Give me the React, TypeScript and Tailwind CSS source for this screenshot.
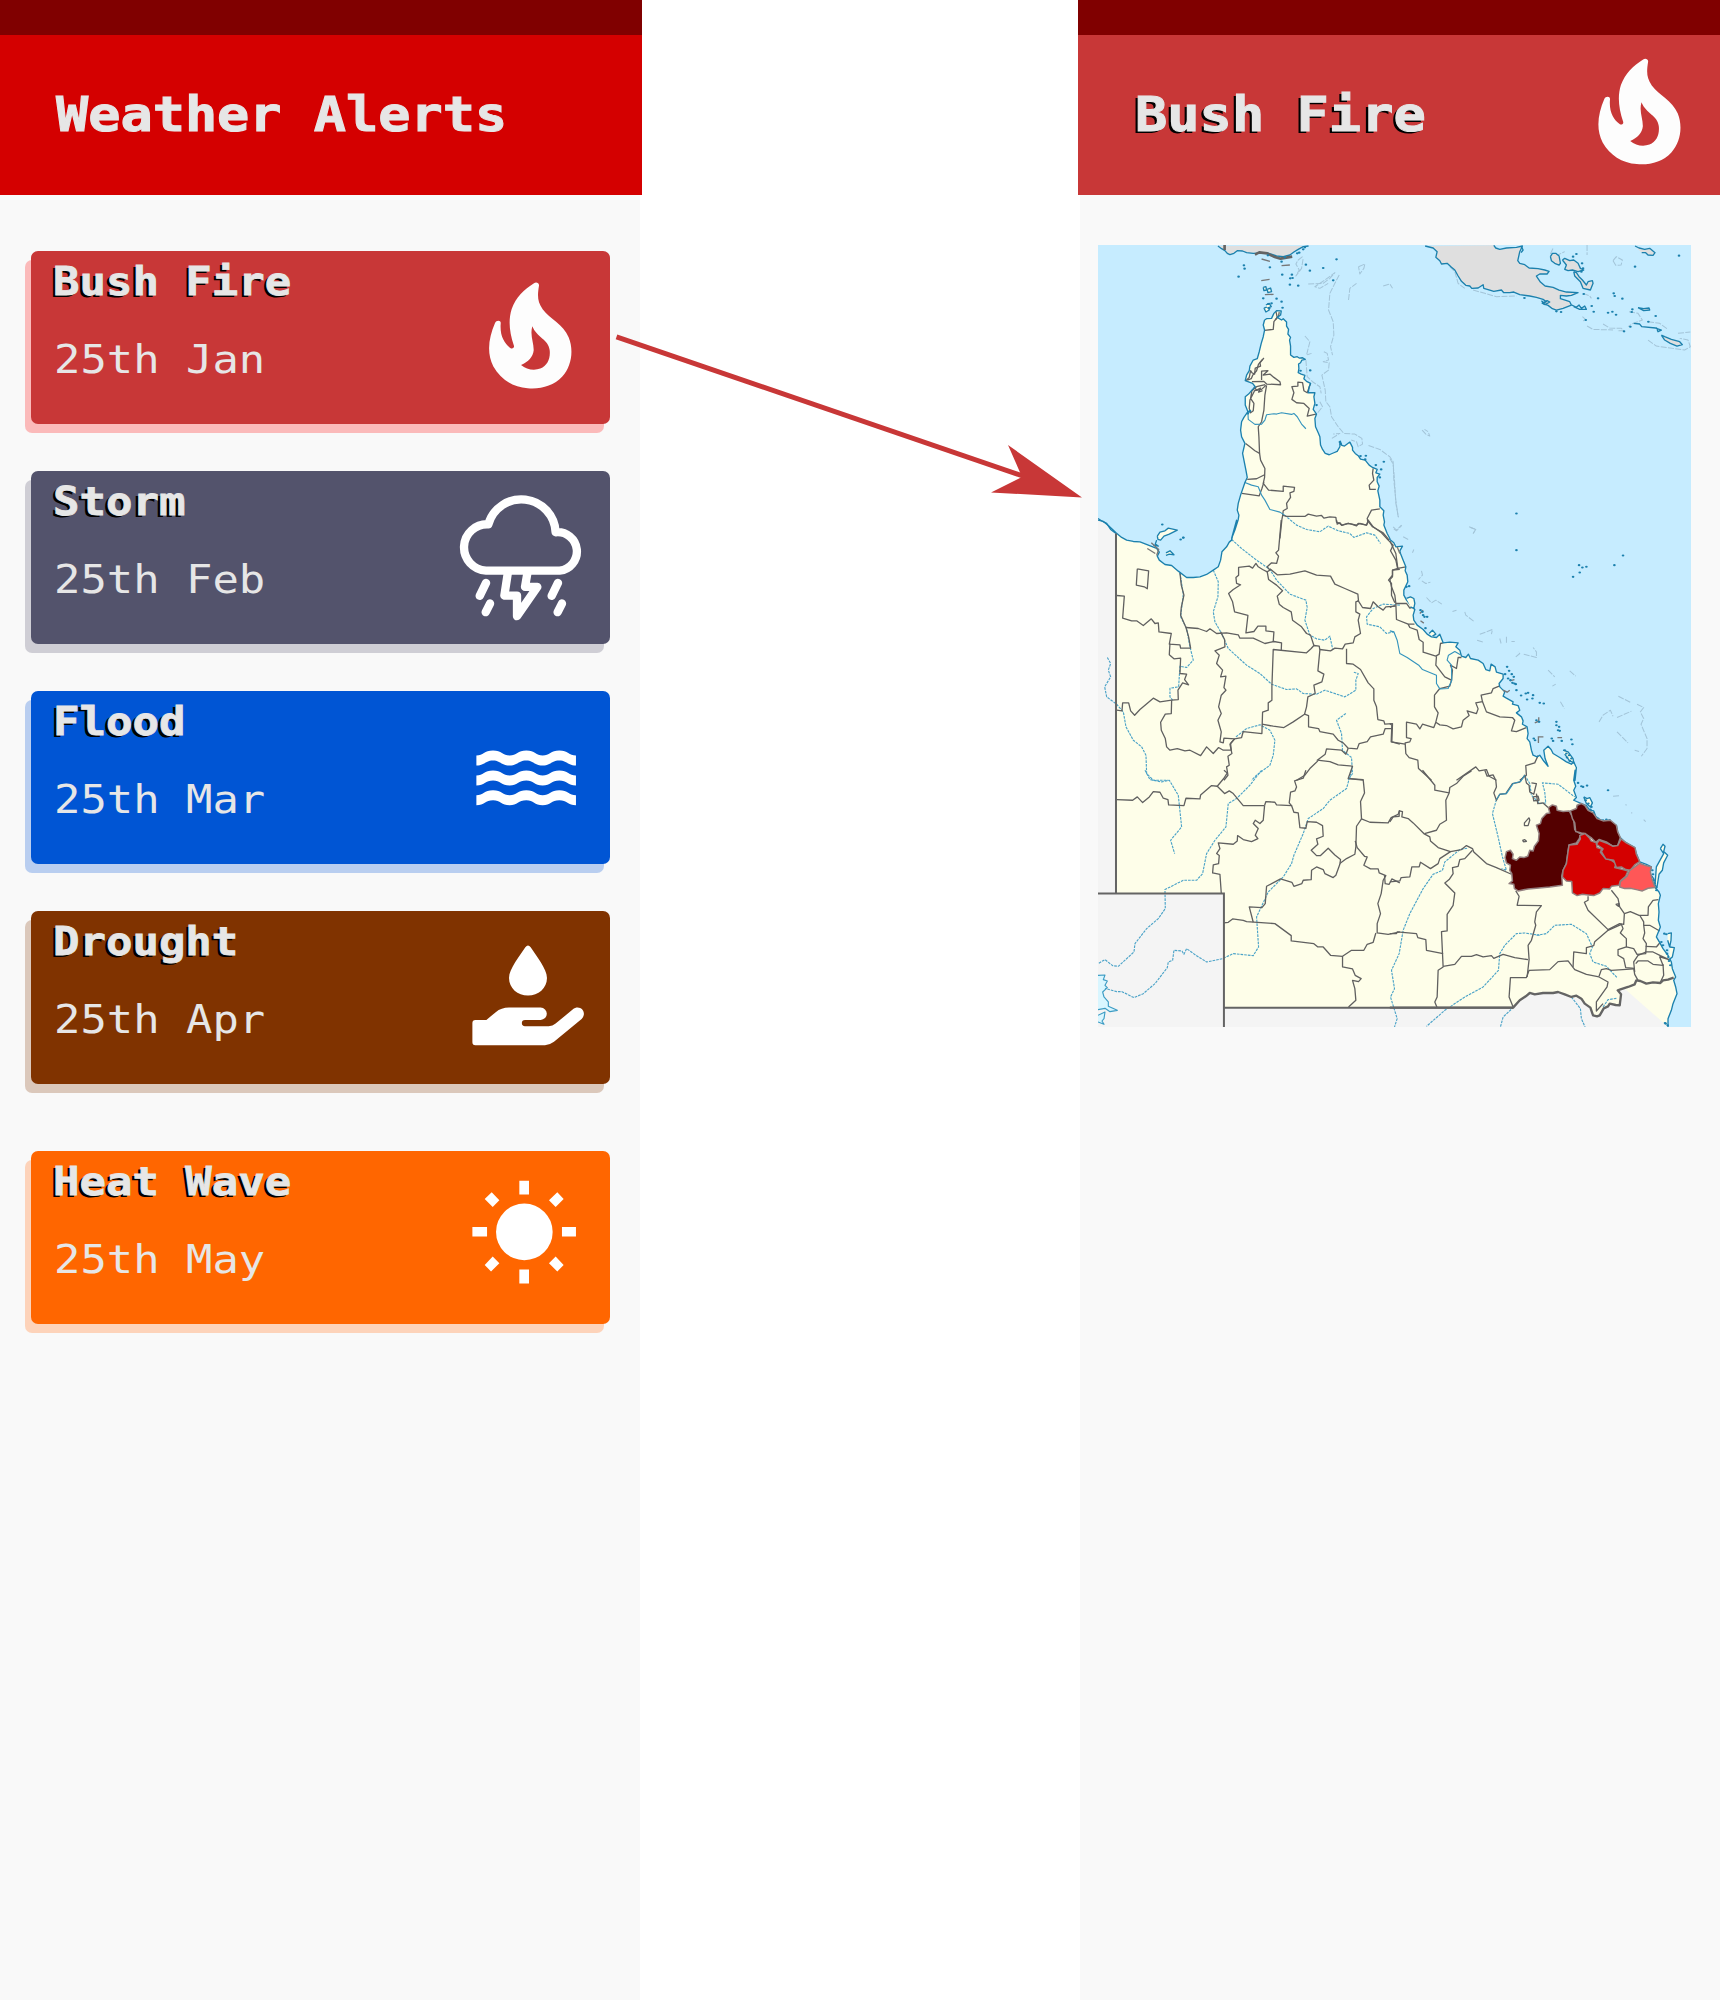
import React from "react";

/* ---------- icons ---------- */

const FLAME =
  "M252 41 C258 36 268 40 267 48 C262 78 262 96 278 119 C300 148 340 165 356 203 C372 242 365 290 337 321 C310 350 273 359 233 356 C189 353 151 329 130 291 C109 250 116 204 135 160 C139 150 154 151 152 162 C149 199 163 222 182 236 C187 239 193 235 192 229 C177 185 175 150 185 118 C198 83 222 60 252 41 Z M247 170 C239 197 252 219 251 243 C249 262 235 278 213 286 C229 300 252 304 271 297 C293 288 302 266 299 241 C295 209 261 205 247 170 Z";

type IconProps = { className?: string };

function FireIcon({ className }: IconProps) {
  return (
    <svg className={className} viewBox="0 -56 480 518" fill="#fdfdfd" fillRule="evenodd">
      <path d={FLAME} />
    </svg>
  );
}

function StormIcon({ className }: IconProps) {
  return (
    <svg
      className={className}
      viewBox="0 604 480 518"
      fill="none"
      stroke="#fff"
      strokeWidth="25"
      strokeLinecap="round"
      strokeLinejoin="round"
    >
      <path d="M108 903 A69.500 69.500 0 0 1 115 764 A103 103 0 0 1 317 788 A57.500 57.500 0 1 1 329 903 Z" />
      <path d="M174 906 L163 978 H201 V1040 L262 952 H225 L233 906" />
      <path d="M108 940 L89 979 M120 1002 L107 1028 M324 940 L305 979 M336 1002 L323 1028" />
    </svg>
  );
}

function FloodIcon({ className }: IconProps) {
  const wave =
    "M79 888 C100 888 102 873 129 873 C155 873 158 888 179 888 C200 888 203 873 229 873 C255 873 258 888 278 888 C299 888 302 873 328 873 C354 873 357 888 378 888 V918 C354 918 351 903 328 903 C304 903 302 918 278 918 C253 918 251 903 229 903 C205 903 202 918 179 918 C154 918 151 903 129 903 C106 903 103 918 79 918 Z";
  return (
    <svg className={className} viewBox="0 694 480 518" fill="#fff">
      <path d={wave} />
      <path d={wave} transform="translate(0 60)" />
      <path d={wave} transform="translate(0 119)" />
    </svg>
  );
}

function DroughtIcon({ className }: IconProps) {
  return (
    <svg className={className} viewBox="0 -56 480 518" fill="#fff">
      <path d="M226 53 Q234 42 242 53 C258 78 291 118 291 145 C291 176 265 198 234 198 C203 198 177 176 177 145 C177 118 210 78 226 53 Z" />
      <path d="M76 271 H109 L137 248 Q154 234 177 234 H272 A18.500 18.500 0 0 1 272 271 H225 A9.500 9.500 0 0 0 225 290 H296 Q308 290 317 282 L368 240 C390 222 414 249 395 268 L312 337 Q299 347 285 347 H76 Q67 347 67 338 V280 Q67 271 76 271 Z" />
    </svg>
  );
}

function HeatIcon({ className }: IconProps) {
  return (
    <svg className={className} viewBox="0 664 480 518" fill="#fff">
      <circle cx="223" cy="907" r="85" />
      <path d="M208 753h29v42h-29z M208 1020h29v42h-29z M67 892h44v29h-44z M336 892h42v29h-42z" />
      <path d="M125 788 L148 812 L128 832 L104 808 Z M322 788 L341 808 L317 832 L297 812 Z M128 981 L148 1001 L123 1026 L104 1006 Z M317 981 L341 1006 L322 1026 L297 1001 Z" />
    </svg>
  );
}

/* ---------- map ---------- */

type Tile = "A" | "B" | "C" | "D" | "E" | "F";
type Line = [Tile, string];

// The map is drawn in six sheets; each has its own origin.
const ORIGIN: Record<Tile, [number, number]> = {
  A: [0, 0],
  B: [900, 0],
  C: [0, 840],
  D: [900, 840],
  E: [0, 1590],
  F: [900, 1590],
};

const place = (tile: Tile, points: string) =>
  points
    .trim()
    .split(/\s+/)
    .map((pair) => {
      const [x, y] = pair.split(",").map(Number);
      return `${x + ORIGIN[tile][0]},${y + ORIGIN[tile][1]}`;
    })
    .join(" ");

const EAST_COAST = [
  place("A", "524,240 530,236 545,235 552,220 560,212 574,213 572,225 562,232 575,240 580,236 590,246 590,258 596,268 594,282 602,292 599,300 602,318 602,345 612,352 622,350 628,354 638,353 646,358 636,360 632,368 626,372 627,386 625,398 634,402 645,406 642,416 650,424 662,430 658,440 655,458 675,458 672,470 675,490 670,508 680,522 675,535 677,560 686,580 690,590 692,615 698,628 706,640 718,644 732,638 742,634 750,620 751,603 756,616 764,618 772,612 780,606 788,622 788,630 796,640 806,648 812,657 826,660 838,675 848,682 862,688 858,698 870,702 862,712 862,725 868,738 864,752 870,780 870,800 882,812 880,825 884,845 882,855 892,880 900,895"),
  place("D", "0,58 12,68 18,80 38,78 30,92 32,100 40,120 48,140 46,152 52,165 54,185 42,210 42,225 50,240 62,255 75,268 70,285 72,300 82,315 100,328 112,342 125,350 140,352 150,342 160,368 180,366 205,368 198,380 210,390 215,408 228,412 236,402 242,415 265,420 280,430 288,448 300,452 304,432 316,440 320,456 340,462 340,475 328,490 330,500 345,515 340,528 350,534 370,545 368,552 385,556 390,570 380,578 395,590 400,602 398,612 412,620 415,640 412,655 420,665 425,690 430,705 442,710 450,705 460,720 475,738 466,715 462,690 475,678 484,688 490,700 510,712 530,725 545,732 552,725 558,738 560,742 556,780"),
  place("F", "556,0 552,30 558,48 552,60 560,82 552,90 575,100 590,106 600,120 612,122 618,138 625,145 640,152 660,150 665,158 680,165 684,185 690,200 705,215 735,232 740,250 750,275 770,282 785,290 780,310 792,325 795,350 808,365 812,375 806,400 808,425 806,450 812,470 800,500 812,520 820,535 835,555 845,575 848,595 858,620 852,630 858,650 862,670 850,700 845,720 835,745 835,770"),
].join(" ");

const GULF_COAST = [
  place("C", "78,38 95,52 110,60 130,64 150,65 175,75 200,85 208,96 202,108 208,120 225,133 245,136 265,153 290,172 310,172 330,170 350,163 370,150 385,140 392,120 396,95 410,80 418,66 425,60 432,30 440,0"),
  place("A", "425,895 435,870 445,838 447,825 442,810 445,790 452,765 465,727 472,712 468,690 462,660 458,640 465,610 455,590 452,570 455,545 462,532 474,515 466,495 466,470 476,462 488,448 496,440 488,430 466,422 470,405 478,392 480,378 490,360 502,356 508,335 514,310 520,290 524,270 520,255 524,240"),
].join(" ");

const SOUTH_BORDER = place(
  "F",
  "852,622 835,628 820,630 812,638 790,636 770,640 752,632 740,630 735,642 715,650 690,658 684,660 694,672 690,705 678,704 660,700 655,708 642,714 630,735 622,738 610,735 602,712 585,700 575,685 560,676 545,680 525,672 505,665 490,668 460,668 435,672 420,668 408,678 390,690 370,712 0,712",
);

const LAND = `${EAST_COAST} ${place("F", "705,655 690,658 684,660 694,672 690,705 660,700 642,714 622,738 610,735 602,712 575,685 545,680 505,665 420,668 370,712 0,712")} 402,2302 402,1960 78,1960 ${GULF_COAST}`;

const OUTBACK =
  "24,835 40,842 60,868 78,880 78,1960 402,1960 402,2302 1270,2302 1320,2250 1605,2240 1735,2360 24,2360";

const BORDERS: Line[] = [
  ["A", "558,214 562,232 552,245 550,268 524,271"],
  ["A", "568,216 566,228 556,240"],
  ["A", "522,354 510,368 512,378 496,384 494,402 486,398 482,392 478,412 468,422"],
  ["A", "518,358 506,372 500,392 488,406 484,416 472,420"],
  ["A", "486,425 522,424 530,432 572,434 570,425 552,412 540,402 520,405 534,392 515,393 515,420"],
  ["A", "526,434 500,440 486,452 482,475 492,490 490,512 482,518 478,505 480,480 494,452 515,448 528,436"],
  ["A", "492,440 500,450 512,444 506,456 518,452"],
  ["A", "530,436 525,465 522,510 515,545 505,560 507,590 509,640 512,660 525,685 524,712 520,730 536,750 580,754 580,738 614,742 612,754 600,758 602,772 590,790 592,805 580,812 578,828 576,838 570,895"],
  ["A", "467,610 480,620 495,632 509,640"],
  ["A", "472,718 500,716 524,704"],
  ["A", "456,760 508,767 516,745 522,726"],
  ["A", "578,825 590,829 645,829 655,822 680,828 695,826 702,834 720,830 738,832 740,846 750,850 756,856 775,850 785,852 800,857 805,850 830,855 835,845 832,835 845,810 870,806"],
  ["A", "662,430 652,458 642,452 638,428 624,426 624,438 606,440 612,458 606,478 620,488 642,490 658,505 652,528 678,522"],
  ["A", "850,685 848,700 852,720 838,735 840,748 858,748"],
  ["A", "832,840 848,860 880,878 898,900"],
  ["C", "574,0 566,90 558,98 566,108 560,130 545,128 532,140 540,150 532,155 518,148 505,140 498,130 488,144 478,138 446,142 446,165 438,172 440,190 452,194 430,208 416,220 428,245 434,275 474,286 468,338 492,334 504,318 528,318 528,332 552,335 550,364"],
  ["C", "142,146 176,152 172,206 163,200 139,195 142,146"],
  ["C", "80,226 103,228 98,294 125,302 140,302 160,316 184,296 195,310 205,308 207,335 244,340 238,372 270,374 272,384 302,384 296,350 288,322 272,285 274,262 282,225 274,195 270,158"],
  ["C", "240,370 238,404 252,416 272,414 270,460 290,462 284,478 296,494 278,488 264,510 265,538 245,540 210,545 190,534 150,568 134,585 122,572 116,548 98,548 96,572 80,570"],
  ["C", "245,540 244,580 226,582 212,606 214,630 226,655 230,680 240,690 262,685 285,692 300,690 332,706 350,680 370,700 386,682 400,690 424,690 422,670 434,656"],
  ["C", "288,322 325,325 350,334 360,326 380,340 410,338 445,344 450,354 490,354 525,370 552,364 575,368 574,392"],
  ["C", "392,335 404,358 405,380 375,392 388,405 380,430 398,450 392,470 408,468 402,502 408,510 394,525 386,560 394,580 384,600 394,635 390,665 400,668 402,654 434,656 455,652 460,634 516,640 518,576 535,570 535,548 546,540 546,500 550,388 650,398 664,385 672,376 688,378 690,390 684,452 702,462 696,485 672,495 676,520 654,530 650,560 644,582"],
  ["C", "532,155 536,178 560,195 578,212 562,228 568,252 580,262 604,275 608,300 635,320 650,340 662,345 672,376"],
  ["C", "540,146 562,164 600,162 645,152 680,165 722,168 735,192 765,205 804,222 806,242 798,245 798,275 810,282 805,300 812,340 795,350 790,368 766,372 758,386 735,384 722,392 690,388"],
  ["C", "740,0 742,12 750,8 756,15 775,10 800,15 810,10 830,15 835,0 850,20 875,38 895,60 910,75 902,92 918,120 924,148"],
  ["C", "804,240 818,262 842,265 850,245 865,260 880,270 888,260 918,258"],
  ["C", "930,148 908,150 908,165 896,180 905,190 905,225 915,248"],
  ["C", "770,386 770,430 790,432 812,448 835,488 852,506 852,540 860,560 864,598 882,602 885,612 908,610 906,665 930,672"],
  ["C", "516,612 550,618 582,622 610,605 644,582 656,586 656,620 686,625 690,634 730,642 745,660 760,668 775,684 802,686 808,670 832,664 842,650 880,642 886,625 908,625"],
  ["C", "775,684 768,702 755,690 710,686 706,702 682,720 720,724 745,734 788,738 775,775 820,780"],
  ["C", "684,722 660,745 645,765 620,780"],
  ["C", "434,656 420,672 426,700 414,708 418,735 410,740 414,765 402,780"],
  ["E", "402,0 412,8 402,24 382,48 404,70 418,62 430,70 460,106 524,106"],
  ["E", "80,88 128,90 142,80 158,97 178,80 190,64 210,66 220,84 234,88 236,104 282,106 288,84 330,86 332,74 365,46 382,48"],
  ["E", "524,106 528,94 555,96 560,104 605,106 598,98 602,66 615,62 620,50 614,32 640,24 648,0"],
  ["E", "524,106 520,150 510,160 496,150 490,160 505,175 496,195 504,205 485,214 460,208 443,196 442,212 430,222 385,218 390,235 380,250 388,256 386,280 370,284 368,308 390,312 394,368"],
  ["E", "605,106 612,126 625,128 630,172 648,174 652,154 680,156 698,166 700,198 680,206 684,222 664,240 680,256 692,256 715,234 735,254 752,268 750,282 738,315 730,322 705,310 700,298 680,290 665,300 664,328 640,330 636,340 612,348 606,336 572,326 530,348 526,400 516,412 478,410 490,456"],
  ["E", "750,280 770,265 795,252 798,230 800,168 815,146"],
  ["E", "780,25 820,28 824,68 812,94 815,146 840,156 895,158 904,142 925,132 930,120"],
  ["E", "796,212 802,232 824,258 832,260 822,285 842,296 865,296 868,308 888,316 880,330 874,370 864,400 872,430 862,460 862,488 895,492 930,485"],
  ["E", "884,315 886,340 898,342 906,326 930,338"],
  ["E", "402,458 415,456 428,446 460,450 470,454 555,460 604,496 604,512 672,520 684,530 700,530 722,555 758,558 785,540 822,540 832,522 850,516 858,488"],
  ["E", "758,558 758,590 788,596 796,615 814,625 806,634 788,630 795,655 798,690 776,710"],
  ["D", "0,62 18,100 24,145 48,140"],
  ["D", "24,145 8,150 8,170 0,178 5,200 15,225 18,250 20,298 55,312 74,312"],
  ["D", "18,250 50,250 60,264 70,260"],
  ["D", "0,262 15,256"],
  ["D", "55,312 60,322 82,330 88,358 100,366 100,396 138,408 148,402 152,370 160,368"],
  ["D", "140,408 138,435 165,470 185,480 188,450 182,435 200,445 205,412 215,412"],
  ["D", "185,480 180,498 150,505 134,525 134,560 145,578 138,606 150,614 170,616 190,626 215,620 220,600 238,586 232,572 260,580 265,566 258,548 278,544 274,525 305,518 310,505 328,498"],
  ["D", "278,544 290,575 330,590 368,592 375,600 365,632 380,634 410,622"],
  ["D", "138,606 132,622 98,612 90,626 80,612 50,606 50,652 64,655 60,665 46,668 48,700 58,712 84,720 86,745 125,780"],
  ["D", "0,610 6,615 4,665 46,672"],
  ["D", "445,706 435,728 408,736 410,765 390,780"],
  ["D", "200,780 258,740 268,752 290,748 298,768 320,780"],
  ["F", "98,0 135,45 135,60 178,68 168,90 170,150 150,162 140,180 104,190"],
  ["F", "178,68 180,52 200,40 220,18 245,2"],
  ["F", "285,0 292,18 310,14 318,30 320,50 312,68 320,90 330,72 348,70 368,40 390,36 405,15 410,38 418,45 420,65 432,72 440,40 425,38"],
  ["F", "0,155 10,140 28,138 28,122 38,124 36,140 55,145 70,158 102,190 120,200 122,212 145,232 182,244 215,238 230,226 248,235 252,245 290,280 320,292 365,312"],
  ["F", "182,244 150,265 145,280 122,295 92,276 88,290 66,290 60,320 34,322 30,332 0,335"],
  ["F", "248,240 225,265 210,268 205,288 188,292 190,310 178,328 165,338 195,368 190,405 172,432 172,482 155,484 160,590 145,600 142,680 135,695 142,712"],
  ["F", "378,362 388,378 382,405 455,406 440,425 435,455 438,465 425,510 415,525 418,568 412,620"],
  ["F", "0,490 20,490 22,485 80,490 84,502 108,508 110,540 160,550"],
  ["F", "160,588 195,582 215,558 245,558 260,553 280,560 305,556 312,564 340,552 375,562 415,568"],
  ["F", "370,710 358,680 362,622 410,622 418,600 480,598 505,574 535,572 555,598 590,612 628,620 655,635 652,650 620,695 620,722 640,700"],
  ["F", "550,590 552,545 590,550 590,532 612,526 615,514 655,480 695,462 700,475 692,488 710,505 710,530 685,538 685,555 702,565 708,592 735,594"],
  ["F", "595,378 595,390 584,396 595,420 655,478 690,460 702,462 704,430 690,410 685,385 665,360"],
  ["F", "704,430 722,424 748,435 775,435 776,410 790,390 806,388"],
  ["F", "750,435 762,455 762,465 780,465 810,482"],
  ["F", "762,465 765,488 760,505 770,520 768,550 742,552 732,535 710,530"],
  ["F", "768,528 800,530 810,518"],
  ["F", "735,605 732,575 745,555 770,545 790,545 812,556 838,568 810,560 820,585 790,582 775,572 745,572 738,580"],
  ["F", "820,582 822,615 812,636"],
  ["F", "732,594 735,612 745,630"],
  ["F", "732,596 665,600 650,595 635,598 628,618"],
  ["F", "430,80 445,78 448,90 432,92 430,80"],
  ["F", "418,142 404,158 404,166 415,166 420,150 418,142"],
  ["F", "398,210 405,208 410,213 402,215 398,210"],
  ["F", "678,402 688,400 686,408 678,402"],
  ["F", "440,70 444,100 460,98 475,112"],
];

const HEAVY: Line[] = [
  ["A", "404,0 404,30"],
  ["A", "495,44 508,37 532,40 552,50 572,56 607,50"],
];

const RIVERS: Line[] = [
  ["C", "425,58 455,85 500,120 540,148 560,180 600,222 648,240 652,262 645,300 660,345 680,356 705,360 720,348 728,385"],
  ["C", "270,158 280,222 272,290 290,325 300,380 310,420 290,442 270,438 266,500 240,504 240,530 248,540"],
  ["C", "370,150 385,185 384,230 370,275 375,305 395,340 415,385 470,435 510,460 545,492 590,508 620,506 640,520 680,522 705,510 765,530 798,510 798,480 805,460 792,456"],
  ["C", "52,412 62,430 55,450 62,470 44,500 50,530 80,552 100,575 108,620 130,660 155,680 168,705 170,760 190,780 235,780"],
  ["C", "438,650 470,625 510,614 540,630 555,660 550,705 540,735 500,765 485,780"],
  ["C", "768,580 740,600 755,640 758,690 785,712 788,760 775,780"],
  ["C", "930,255 880,252 850,265 830,290 832,312 870,320 890,340 912,335"],
  ["A", "584,825 620,855 650,868 690,875 715,858 745,872 780,880 792,892 830,878 855,885 872,910"],
  ["E", "165,0 180,28 215,35 238,30 265,75 275,170 242,210 254,250"],
  ["E", "515,0 480,45 440,85 415,100 408,170 375,210 350,250 338,310 320,330 280,330 225,358 226,415 205,445 170,475 135,520 132,545 85,588 68,586 45,568 24,580"],
  ["E", "785,0 770,55 720,90 700,115 655,145 640,190 612,255 605,280 580,320 535,365 500,440 506,530 490,556 430,550 398,565 350,575 318,555 290,535 282,552 276,542 252,540 248,570 235,575 232,592 195,640 160,670 132,682 96,664 80,664 45,654"],
  ["F", "232,234 210,238 165,275 158,300 130,312 100,355 60,430 40,480 28,550 5,600 14,655 2,680 22,745 14,770"],
  ["F", "320,88 308,130 325,200 338,260 350,300 335,295"],
  ["F", "405,15 420,40 425,75 450,100 468,98 465,65 458,38 505,42 555,80"],
  ["F", "450,495 405,488 380,490 345,525 330,550 326,600 280,650 225,680 165,720 110,768"],
  ["F", "440,495 470,490 495,465 545,462 590,490 608,530 600,550 610,575 650,588 682,622"],
  ["F", "372,710 340,740 332,770"],
  ["F", "545,680 572,715 575,745 586,770"],
  ["F", "680,684 655,688 640,710"],
];

const SOLID_RIVERS: Line[] = [
  ["A", "474,515 475,538 495,553 515,552 525,540 530,524 552,521 560,522 575,518 605,523 612,520 622,530 635,552 648,566"],
  ["A", "465,727 485,735 505,740 515,765 525,780 540,808 570,816 584,825"],
  ["D", "0,332 12,335 22,360 30,400 52,412 88,436 98,448 140,465 140,490 150,506 175,505 186,480 185,435 172,420 176,405 195,394 212,404"],
  ["F", "320,88 330,72 350,70 370,40 392,34 405,15"],
];

const REEFS: Line[] = [
  ["A", "748,105 735,130 720,160 716,210 730,245 732,285 722,320 728,345"],
  ["A", "702,335 712,340 716,360 700,365 718,368 716,390 696,405 706,450 708,485 720,500 725,530 745,560 762,580 795,582 816,595 818,612 805,620 800,605 784,600"],
  ["A", "836,616 870,628 900,650 910,665 912,720 918,780 925,830"],
  ["A", "655,132 700,130 720,115 735,98 705,120 675,140 690,145 715,130"],
  ["A", "638,50 625,60 618,72 628,90 618,108 635,85 640,55"],
  ["A", "776,180 780,145 800,130"],
  ["A", "806,80 825,72 822,85 810,102 806,80"],
  ["A", "880,138 900,132 908,145"],
  ["A", "645,288 660,305 650,345 665,340"],
  ["A", "648,360 652,410 668,425 690,440 694,460"],
  ["A", "690,485 698,500 682,520"],
  ["A", "726,595 750,580 730,582"],
  ["B", "97,570 108,582 120,588 115,575 104,568"],
  ["B", "0,655 10,672 14,720 18,790 26,832"],
  ["B", "12,866 20,872 36,856"],
  ["B", "238,860 258,868 250,880"],
  ["B", "180,80 195,95 205,130 225,145"],
  ["B", "250,150 285,160 320,170 380,168"],
  ["B", "592,258 610,268 670,270"],
  ["B", "640,252 660,264 695,265 702,272 682,272"],
  ["B", "775,300 800,318 850,325 885,330 902,320 895,300 870,295"],
  ["B", "865,280 902,276"],
  ["B", "718,215 745,220 758,240 730,250 715,260"],
  ["B", "670,62 680,50 698,60 694,75 678,76 670,62"],
  ["B", "592,15 592,45"],
  ["B", "482,42 490,25"],
  ["B", "498,48 525,35"],
  ["B", "578,230 590,240 580,242"],
  ["B", "580,160 600,168 605,175"],
  ["B", "775,245 810,250 835,268"],
  ["D", "95,152 98,165 86,178"],
  ["D", "96,182 108,190 122,186"],
  ["D", "110,232 125,248 138,240 156,252"],
  ["D", "225,275 228,285 254,305"],
  ["D", "188,274 200,270"],
  ["D", "262,360 280,366"],
  ["D", "270,342 290,335 308,328 305,342"],
  ["D", "330,355 334,370"],
  ["D", "350,350 350,372"],
  ["D", "365,364 375,364"],
  ["D", "378,410 390,400 385,395"],
  ["D", "402,402 440,412 440,395 430,382"],
  ["D", "475,450 495,470"],
  ["D", "540,452 558,468"],
  ["D", "488,498 498,492"],
  ["D", "512,545 524,565"],
  ["D", "628,605 640,585 662,570 670,588"],
  ["D", "682,592 725,573"],
  ["D", "686,528 725,548"],
  ["D", "742,552 762,562 752,575 762,595 754,612 772,655 772,685 755,708"],
  ["D", "682,635 715,668"],
  ["D", "735,690 748,694"],
  ["D", "10,20 20,30 35,15"],
  ["D", "40,50 55,58"],
  ["D", "68,98 72,88"],
  ["D", "242,22 258,28 250,40"],
  ["F", "670,78 690,76"],
  ["F", "708,102 710,106"],
  ["F", "726,126 726,130"],
  ["F", "762,148 768,154"],
];

const SPECKS: Line[] = [
  ["A", "462,76 464,86 446,110 540,82 577,104 601,115 608,114 606,104 600,134 625,137 560,176 575,185 578,203 700,84 740,58 648,74 730,121 660,92 640,28 628,38 622,40 645,22 585,52 534,46 575,65 520,175 545,190 632,392 661,391 680,495 812,648 828,647 826,658 882,665 874,688 870,712 858,675 538,205 535,192"],
  ["A", "750,606 752,612 478,515 474,520 480,512 217,853 280,893"],
  ["B", "868,47 736,80 672,160 675,168 698,176 625,175 588,240 577,70 580,85 575,95 655,218 668,215 679,224 606,198 612,215 798,228 776,245 722,260 703,274 728,208 726,216 404,174 582,162 380,820 500,214 514,216 560,42 550,50"],
  ["C", "280,52 272,58"],
  ["D", "50,200 58,198 92,270 98,275 100,285 104,290 112,290 107,324 352,440 358,452 366,462 372,470 362,480 374,490 346,462 355,475 368,488 378,492 380,510 394,526 408,520 415,518 430,525 412,538 428,535 450,548 462,550 500,605 500,615 508,620 505,630 510,632 545,658 548,672 486,655 490,662 516,662 440,600 448,605 436,660 432,655 568,135 578,142 590,140 570,157 550,170 674,135 700,106 380,90 525,690 530,700 538,705 545,715 540,722 532,712"],
  ["F", "565,38 575,48 580,50 592,46 588,90 596,100 605,110 602,118 612,128 625,145 650,148 660,150 640,150 655,60 788,300 790,312 786,320 792,330 795,340 800,352 800,360 824,490 830,492 820,525 832,540 836,560 838,572 842,585 832,550 828,760 834,765 826,758 815,515"],
];

// Papua New Guinea and the neighbouring islands
const FOREIGN_LAND: Line[] = [
  ["A", "384,18 395,26 405,32 412,40 420,44 432,40 442,32 458,33 470,38 490,40 530,38 560,48 580,50 600,45 612,36 625,28 640,20 656,18"],
  ["B", "106,18 130,24 142,35 138,52 150,62 155,72 172,70 185,82 195,90 205,108 215,124 228,136 240,138 246,145 265,144 280,134 282,145 300,150 312,154 335,150 342,158 360,158 372,156 390,164 420,168 440,172 460,178 470,185 458,190 475,196 488,206 500,210 520,205 545,195 540,185 512,176 512,166 530,168 545,166 565,158 530,156 508,150 490,142 466,138 452,126 440,108 450,102 472,102 478,94 465,90 445,86 418,84 405,74 390,70 384,62 390,35 398,18 380,22 350,24 330,28 318,24 312,16"],
  ["B", "482,50 488,40 498,40 508,48 512,70 508,75 495,70 485,62 482,50"],
  ["B", "518,60 525,55 540,62 552,60 565,70 572,85 582,90 565,95 548,90 535,92 525,88 530,75 518,60"],
  ["B", "552,95 560,98 568,110 578,120 590,135 595,125 608,122 610,130 602,150 580,145 572,125 555,108 552,95"],
  ["B", "745,203 762,206 778,204 780,210 762,212 745,203"],
  ["B", "736,18 748,24 765,28 780,25 796,38 790,46 775,45 768,38 756,38"],
  ["B", "815,285 825,290 845,298 870,305 878,314 862,318 842,310 825,300 815,285"],
];

const REEF_CHAINS: Line[] = [
  ["B", "732,250 750,252 756,260 798,264 815,270 805,275 800,262"],
  ["B", "546,195 560,202 568,195 575,205 585,198 590,208 570,208 552,200"],
  ["B", "455,182 462,188 472,182 480,186 466,194 456,188"],
  ["B", "395,20 400,30 394,38"],
  ["C", "200,60 196,72 205,78 190,75"],
  ["C", "24,0 40,4 55,16 78,38"],
  ["A", "24,835 38,844 50,850 62,868 78,880"],
];

const ISLANDS: Line[] = [
  ["A", "520,142 528,140 530,150 522,152 520,142"],
  ["A", "532,148 542,144 545,155 534,158 532,148"],
  ["A", "522,204 535,200 538,210 528,216 522,204"],
  ["A", "528,195 538,190 544,200 532,204"],
  ["C", "202,48 210,36 225,32 235,24 262,30 250,36 238,42 222,48 212,60 204,58 202,48"],
  ["C", "228,98 240,92 252,104 238,102 228,106"],
  ["D", "50,235 62,230 72,235 75,250 72,265 62,260"],
  ["D", "118,340 128,330 138,342 128,348"],
  ["D", "520,690 535,695 550,715 552,728 538,720 525,702"],
  ["F", "582,80 592,85 600,82 608,98 602,110 590,100 582,80"],
  ["F", "812,235 820,222 826,228 822,244 834,255 822,278 818,300 808,312 802,350 796,345 800,290 812,268 822,250 812,235"],
  ["F", "834,490 845,488 844,510 840,530 834,510"],
  ["F", "840,530 854,532 848,560 838,568"],
];

const LAKES: Line[] = [
  ["E", "24,615 45,614 40,628 52,632 45,645 52,652 38,665 42,680 55,695 55,708 82,720 60,724 45,714 24,718"],
  ["E", "24,735 45,725 42,745 36,752 42,762 24,755"],
];

const ZONES: { fill: string; points: string }[] = [
  { fill: "#540000", points: "488,104 500,108 502,120 520,124 538,122 548,138 552,150 555,178 565,186 575,192 568,206 560,218 538,224 534,250 530,280 520,300 516,318 518,345 480,350 440,354 415,356 385,362 374,355 372,342 358,340 368,332 366,310 360,300 362,285 350,278 346,262 350,244 362,240 370,252 368,265 380,270 390,260 402,262 414,258 420,240 430,242 434,228 446,212 448,190 440,165 452,160 456,145 470,130 480,128 476,112" },
  { fill: "#540000", points: "542,122 560,115 562,105 575,100 585,105 595,120 610,128 622,145 640,152 662,150 680,165 684,185 692,202 684,226 670,228 650,215 628,208 618,216 604,202 586,190 575,188 558,184 555,158 548,145" },
  { fill: "#d40000", points: "586,190 600,204 604,212 620,218 622,232 636,236 632,246 645,262 665,270 680,280 675,292 700,298 715,302 708,318 692,332 688,345 665,348 660,356 640,355 630,368 612,376 595,374 578,372 562,376 548,368 546,334 530,332 518,320 520,300 530,280 534,250 538,224 562,222 572,206 570,196" },
  { fill: "#d40000", points: "628,210 650,218 670,228 684,226 694,206 710,218 736,232 740,252 750,274 735,284 722,300 708,298 695,290 680,292 672,270 648,266 635,244 640,236 620,222" },
  { fill: "#ff5757", points: "750,279 768,286 785,290 782,305 788,330 796,352 775,354 758,362 740,358 722,354 705,355 690,350 692,334 712,318 720,300 735,290" },
];

function Lines({ items, ...style }: { items: Line[] } & React.SVGProps<SVGGElement>) {
  return (
    <g fill="none" strokeLinejoin="round" {...style}>
      {items.map(([tile, points], i) => (
        <polyline key={i} points={place(tile, points)} />
      ))}
    </g>
  );
}

function QueenslandMap() {
  return (
    <svg className="block h-[782px] w-[593px]" viewBox="24 15 1780 2345" preserveAspectRatio="none">
      <rect x="24" y="15" width="1780" height="2345" fill="#c6ecff" />
      <polygon points={OUTBACK} fill="#f4f4f4" />
      <polygon points={LAND} fill="#fefee9" />
      <Lines items={REEFS} stroke="#a3c4d8" strokeWidth="3" strokeDasharray="18 4" />
      <Lines items={FOREIGN_LAND} fill="#dfdfdf" stroke="#1b80ad" strokeWidth="4" />
      <Lines items={REEF_CHAINS} stroke="#1b80ad" strokeWidth="4" />
      <Lines items={LAKES} fill="#d9f6ff" stroke="#3c9cc4" strokeWidth="3.4" />
      <Lines items={RIVERS} stroke="#4ba3c8" strokeWidth="3.4" strokeDasharray="8 3" />
      <Lines items={BORDERS} stroke="#606060" strokeWidth="3.9" />
      <Lines items={SOLID_RIVERS} stroke="#3494bd" strokeWidth="3.4" />
      <g fill="none" stroke="#1b80ad" strokeWidth="4" strokeLinejoin="round">
        <polyline points={EAST_COAST} />
        <polyline points={GULF_COAST} />
      </g>
      <Lines items={ISLANDS} fill="#fefee9" stroke="#1b80ad" strokeWidth="4" />
      <g fill="none" stroke="#646464" strokeWidth="6">
        <polyline points="78,880 78,1960" />
        <polyline points="24,1960 402,1960 402,2360" />
        <polyline points="402,2302 1270,2302" />
        <polyline points={SOUTH_BORDER} strokeLinejoin="round" strokeWidth="7" />
      </g>
      <Lines items={HEAVY} stroke="#646464" strokeWidth="8" />
      <path
        d="M515 57l25 7M575 77l25 -2M514 122l25 -4M525 164l26 -1M172 925l24 15M184 908l22 20l-6 18M990 1120l10 -10M992 1142l10 7M1240 1350l12 6l8 -6M1346 1508v-18h15M1403 1492h14M1335 1448l12 -5v-12M1260 1322l14 -4M922 920l8 20"
        fill="none"
        stroke="#777"
        strokeWidth="4"
      />
      <g fill="#1b80ad">
        {SPECKS.flatMap(([tile, points]) =>
          place(tile, points)
            .split(" ")
            .map((pair, i) => {
              const [x, y] = pair.split(",").map(Number);
              return <ellipse key={`${pair}-${i}`} cx={x} cy={y} rx={4} ry={3.2} />;
            }),
        )}
      </g>
      <g stroke="#948080" strokeWidth="4.5" strokeLinejoin="round">
        {ZONES.map((zone, i) => (
          <polygon key={i} points={place("F", zone.points)} fill={zone.fill} />
        ))}
      </g>
    </svg>
  );
}

/* ---------- alert list ---------- */

const ALERTS = [
  { name: "Bush Fire", date: "25th Jan", Icon: FireIcon, tone: "bg-[#c83737] shadow-[-6px_9px_0_#fbbaba]", gap: "" },
  { name: "Storm", date: "25th Feb", Icon: StormIcon, tone: "bg-[#53536c] shadow-[-6px_9px_0_#cfced5]", gap: "mt-[47.500px]" },
  { name: "Flood", date: "25th Mar", Icon: FloodIcon, tone: "bg-[#0055d4] shadow-[-6px_9px_0_#b9cef0]", gap: "mt-[47.500px]" },
  { name: "Drought", date: "25th Apr", Icon: DroughtIcon, tone: "bg-[#803300] shadow-[-6px_9px_0_#dbc8bb]", gap: "mt-[47.500px]" },
  { name: "Heat Wave", date: "25th May", Icon: HeatIcon, tone: "bg-[#ff6600] shadow-[-6px_9px_0_#fdd3ba]", gap: "mt-[67.500px]" },
];

function AlertCard({ name, date, Icon, tone, gap }: (typeof ALERTS)[number]) {
  return (
    <article className={`flex h-[172.500px] w-[578.500px] justify-between rounded-[7px] ${tone} ${gap}`}>
      <div className="pt-[4.500px] pl-[22px]">
        <h2 className="origin-left scale-x-[1.142] text-[38.500px] leading-[52px] font-bold whitespace-pre [-webkit-text-stroke:0.800px_#e6e6e6] [text-shadow:-2.500px_1.500px_0_#000]">
          {name}
        </h2>
        <p className="mt-[26px] ml-[1px] origin-left scale-x-[1.139] text-[38.500px] leading-[52px] whitespace-pre">{date}</p>
      </div>
      <Icon className="h-[172.500px] w-[160px]" />
    </article>
  );
}

export default function App() {
  return (
    <div className="relative flex h-[2000px] w-[1720px] justify-between overflow-hidden bg-white font-['DejaVu_Sans_Mono',monospace] text-[#e6e6e6]">
      <section className="flex w-[642px] flex-col">
        <div className="h-[34.500px] bg-[#800000]" />
        <header className="h-[160.800px] bg-[#d40000] pt-[46px] pl-[55.500px]">
          <h1 className="inline-block origin-left scale-x-[1.115] text-[48px] leading-[66px] font-bold whitespace-pre [-webkit-text-stroke:1px_#e6e6e6]">
            Weather Alerts
          </h1>
        </header>
        <main className="w-[640px] flex-1 bg-[#f9f9f9] pt-[56px] pl-[31px]">
          {ALERTS.map((alert) => (
            <AlertCard key={alert.name} {...alert} />
          ))}
        </main>
      </section>

      <section className="flex w-[642px] flex-col">
        <div className="h-[34.500px] bg-[#800000]" />
        <header className="flex h-[160.800px] justify-between bg-[#c83737] pr-[39px] pl-[57px]">
          <h1 className="mt-[46px] origin-left scale-x-[1.118] text-[48px] leading-[66px] font-bold whitespace-pre [-webkit-text-stroke:1px_#e6e6e6] [text-shadow:-2.500px_1.800px_0_#000]">
            Bush Fire
          </h1>
          <svg className="mt-[23px] h-[107px] w-[83px]" viewBox="116 37 250 321" fill="#fdfdfd" fillRule="evenodd">
            <path d={FLAME} />
          </svg>
        </header>
        <main className="ml-[2px] flex-1 bg-[#f9f9f9] pt-[49.700px] pl-[18px]">
          <QueenslandMap />
        </main>
      </section>

      <svg className="pointer-events-none absolute top-[320px] left-[600px] h-[200px] w-[500px]" viewBox="600 320 500 200">
        <path d="M616.500 336.800 L1030 478.500" stroke="#c83737" strokeWidth="5" />
        <path d="M1082 497.500 L1008 445 L1022 477 L991 492.500 Z" fill="#c83737" />
      </svg>
    </div>
  );
}
